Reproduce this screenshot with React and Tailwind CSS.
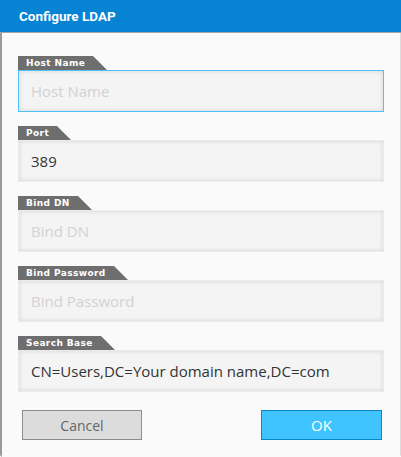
import React from 'react';

const fields = [
  { label: 'Host Name', value: '', placeholder: 'Host Name', focus: true },
  { label: 'Port', value: '389', placeholder: 'Port' },
  { label: 'Bind DN', value: '', placeholder: 'Bind DN' },
  { label: 'Bind Password', value: '', placeholder: 'Bind Password' },
  { label: 'Search Base', value: 'CN=Users,DC=Your domain name,DC=com', placeholder: 'Search Base' },
];

function Field({ label, value, placeholder, focus }) {
  return (
    <div className="flex flex-col">
      {/* Tab label */}
      <div className="flex h-[14px] items-stretch">
        <span className="flex items-center bg-[#6e6e6e] pl-[8px] pr-[7px] pt-[1px] font-['DejaVu_Sans',sans-serif] text-[9px] font-bold tracking-[0.4px] text-white">
          {label}
        </span>
        <svg width="15" height="14" viewBox="0 0 15 14" className="block">
          <polygon points="0,0 1,0 15,14 0,14" fill="#6e6e6e" />
        </svg>
      </div>
      <input
        autoFocus={focus}
        defaultValue={value}
        placeholder={placeholder}
        className={
          'h-[42px] w-[366px] bg-[#f4f4f4] px-[12px] text-[15px] text-[#333] outline-none placeholder:text-[#d2d2d2] shadow-[inset_0_0_5px_rgba(0,0,0,0.13)] ' +
          (focus ? 'border border-[#4fc3f7]' : 'border border-[#ebebeb]')
        }
      />
    </div>
  );
}

export default function App() {
  return (
    <div className="h-[457px] w-[401px] overflow-hidden rounded-b-[3px] bg-[#fafafa] font-['Open_Sans','DejaVu_Sans',sans-serif]">
      {/* Header */}
      <header className="flex h-[33px] items-center border-b border-[#a5a5a5] bg-[#0783d4] pl-[19px]">
        <h1 className="font-['Roboto',sans-serif] text-[13.5px] font-bold text-white">Configure LDAP</h1>
      </header>

      <div className="flex h-[424px] flex-col border-l-2 border-r border-l-[#9a9a9a] border-r-[#dcdcdc] pl-[16px] pt-[23px]">
        <div className="flex flex-col gap-[14px]">
          {fields.map((f) => (
            <Field key={f.label} {...f} />
          ))}
        </div>

        <div className="mt-[18px] flex justify-between pl-[4px] pr-[18px]">
          <button className="h-[30px] w-[120px] border border-[#8c8c8c] bg-[#dcdcdc] text-[14px] text-[#666]">
            Cancel
          </button>
          <button className="h-[30px] w-[121px] border border-[#0b86c4] bg-[#40c4ff] text-[15px] text-white">
            OK
          </button>
        </div>
      </div>
    </div>
  );
}
